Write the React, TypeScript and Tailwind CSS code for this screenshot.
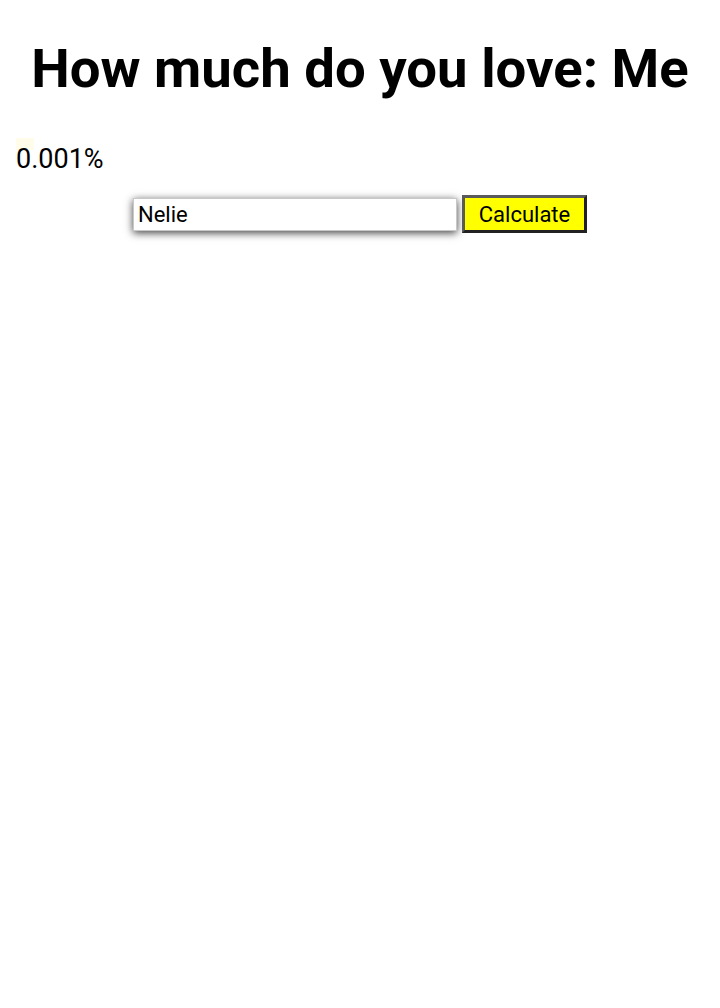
export default function App() {
  return (
    <div className="min-h-[1008px] bg-white text-black" style={{ fontFamily: "Roboto, 'Noto Sans', sans-serif" }}>
      <h1 className="pt-[35px] text-center text-[54.5px] font-bold leading-[66px]">How much do you love: Me</h1>
      <div className="relative mt-[41px] px-4">
        <div className="absolute left-4 top-[-4px] h-[12px] w-[18px] bg-[#fffdea]" />
        <p className="relative text-[27px] leading-[34px]">0.001%</p>
      </div>
      <div className="mt-[19px] flex items-center justify-center gap-[5px]">
        <input
          defaultValue="Nelie"
          className="h-[33px] w-[324px] border border-[#c8c8c8] bg-white px-[4px] text-[22px] text-black shadow-[0_2px_8px_rgba(0,0,0,0.75)] outline-none"
          style={{ fontFamily: "Roboto, sans-serif" }}
        />
        <button
          className="h-[38px] w-[125px] border-[3px] border-t-[#5a5a5a] border-l-[#5a5a5a] border-b-[#222] border-r-[#222] bg-[#ffff00] text-[22px] text-black"
          style={{ fontFamily: "Roboto, sans-serif" }}
        >
          Calculate
        </button>
      </div>
    </div>
  );
}
